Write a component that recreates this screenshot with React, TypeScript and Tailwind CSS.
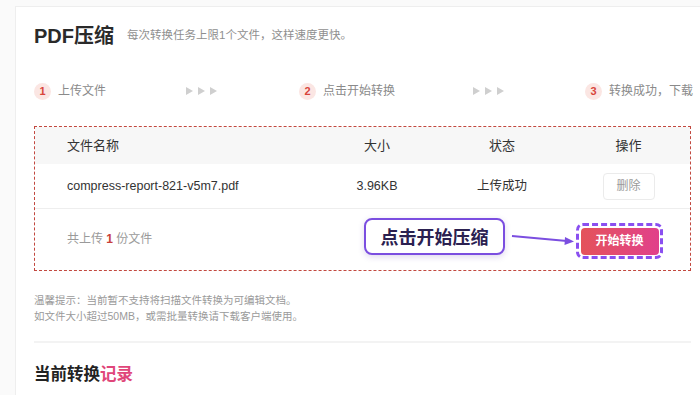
import React from "react";

const font = { fontFamily: '"Liberation Sans", "Noto Sans CJK SC", sans-serif' };

function Arrows() {
  return (
    <svg width="32" height="10" viewBox="0 0 32 10">
      <polygon points="0,1 7,5 0,9" fill="#cfcfcf" />
      <polygon points="12,1 19,5 12,9" fill="#cfcfcf" />
      <polygon points="24,1 31,5 24,9" fill="#cfcfcf" />
    </svg>
  );
}

function Step({ n, label }: { n: number; label: string }) {
  return (
    <div className="flex items-center whitespace-nowrap">
      <div className="w-[17px] h-[17px] rounded-full bg-[#fbe6e3] text-[#d8453b] text-[11px] font-bold flex items-center justify-center">
        {n}
      </div>
      <span className="ml-[7px] text-[12px] text-[#8a8a8a]">{label}</span>
    </div>
  );
}

export default function App() {
  return (
    <div className="w-[700px] h-[395px] overflow-hidden bg-[#fafafa] pt-[6px] pl-[15px]" style={font}>
      <div className="w-[720px] h-[400px] bg-white border-l border-t border-[#eeeeee] pl-[18px]">
        <div className="w-[657px]">
          {/* Title */}
          <div className="flex items-center h-[28px] mt-[15px]">
            <span className="text-[20px] font-bold text-[#2a2a2a] leading-none">PDF压缩</span>
            <span className="ml-[13px] text-[11.5px] text-[#8f8f8f]">每次转换任务上限1个文件，这样速度更快。</span>
          </div>

          {/* Steps */}
          <div className="flex items-center h-[20px] mt-[31px]">
            <div className="w-[152px] shrink-0"><Step n={1} label="上传文件" /></div>
            <div className="w-[113px] shrink-0 flex"><Arrows /></div>
            <div className="w-[174px] shrink-0"><Step n={2} label="点击开始转换" /></div>
            <div className="w-[112px] shrink-0 flex"><Arrows /></div>
            <div className="shrink-0"><Step n={3} label="转换成功，下载" /></div>
          </div>

          {/* Dashed box */}
          <div className="mt-[25px] border border-dashed border-[#c2483f] h-[145px]">
            <div className="grid grid-cols-[282px_120px_130px_1fr] h-[37px] bg-[#f7f7f7] items-center text-[13px] text-[#333]">
              <div className="pl-[32px]">文件名称</div>
              <div className="text-center">大小</div>
              <div className="text-center">状态</div>
              <div className="text-center">操作</div>
            </div>
            <div className="grid grid-cols-[282px_120px_130px_1fr] h-[45px] items-center text-[12.5px] text-[#333] border-b border-[#eeeeee]">
              <div className="pl-[32px]">compress-report-821-v5m7.pdf</div>
              <div className="text-center">3.96KB</div>
              <div className="text-center">上传成功</div>
              <div className="flex justify-center">
                <div className="w-[52px] h-[27px] border border-[#ebebeb] rounded-[4px] flex items-center justify-center text-[12px] text-[#9a9a9a]">
                  删除
                </div>
              </div>
            </div>
            <div className="flex items-center h-[60px] pl-[32px] pr-[27px]">
              <span className="text-[12px] text-[#9a9a9a]">
                共上传 <b className="text-[#c8403a]">1</b> 份文件
              </span>
              <div className="ml-auto flex items-center -mt-[6px]">
                <div className="w-[141px] h-[37px] border-2 border-[#7b4ee0] rounded-[8px] bg-white shadow-[0_2px_6px_rgba(80,40,160,0.18)] flex items-center justify-center text-[18px] font-bold text-[#2b2150]" style={{ fontFamily: '"Noto Sans CJK SC", sans-serif' }}>
                  点击开始压缩
                </div>
                <svg width="64" height="14" viewBox="0 0 64 14" className="ml-[6px] mt-[6px]">
                  <line x1="1" y1="4" x2="56" y2="9" stroke="#7b4ee0" strokeWidth="2" />
                  <polygon points="63,9.5 54,5 53.5,13" fill="#7b4ee0" />
                </svg>
                <div className="w-[87px] h-[36px] ml-[1px] mt-[10px] border-[3px] border-dashed border-[#8a4ff0] rounded-[7px] flex items-center justify-center">
                  <div className="w-[78px] h-[27px] rounded-[4px] bg-gradient-to-r from-[#e4525a] to-[#e1408a] text-white text-[12px] font-bold flex items-center justify-center">
                    开始转换
                  </div>
                </div>
              </div>
            </div>
          </div>

          {/* Tips */}
          <div className="mt-[21px] text-[10.5px] leading-[16px] text-[#9a9a9a]">
            <div>温馨提示：当前暂不支持将扫描文件转换为可编辑文档。</div>
            <div>如文件大小超过50MB，或需批量转换请下载客户端使用。</div>
          </div>

          <div className="mt-[17px] h-[2px] bg-[#f3f3f3]" />

          <div className="mt-[18px] text-[16.5px] font-bold text-[#222]" style={{ fontFamily: '"Noto Sans CJK SC", sans-serif' }}>
            当前转换<span className="text-[#e0467a]">记录</span>
          </div>
        </div>
      </div>
    </div>
  );
}
